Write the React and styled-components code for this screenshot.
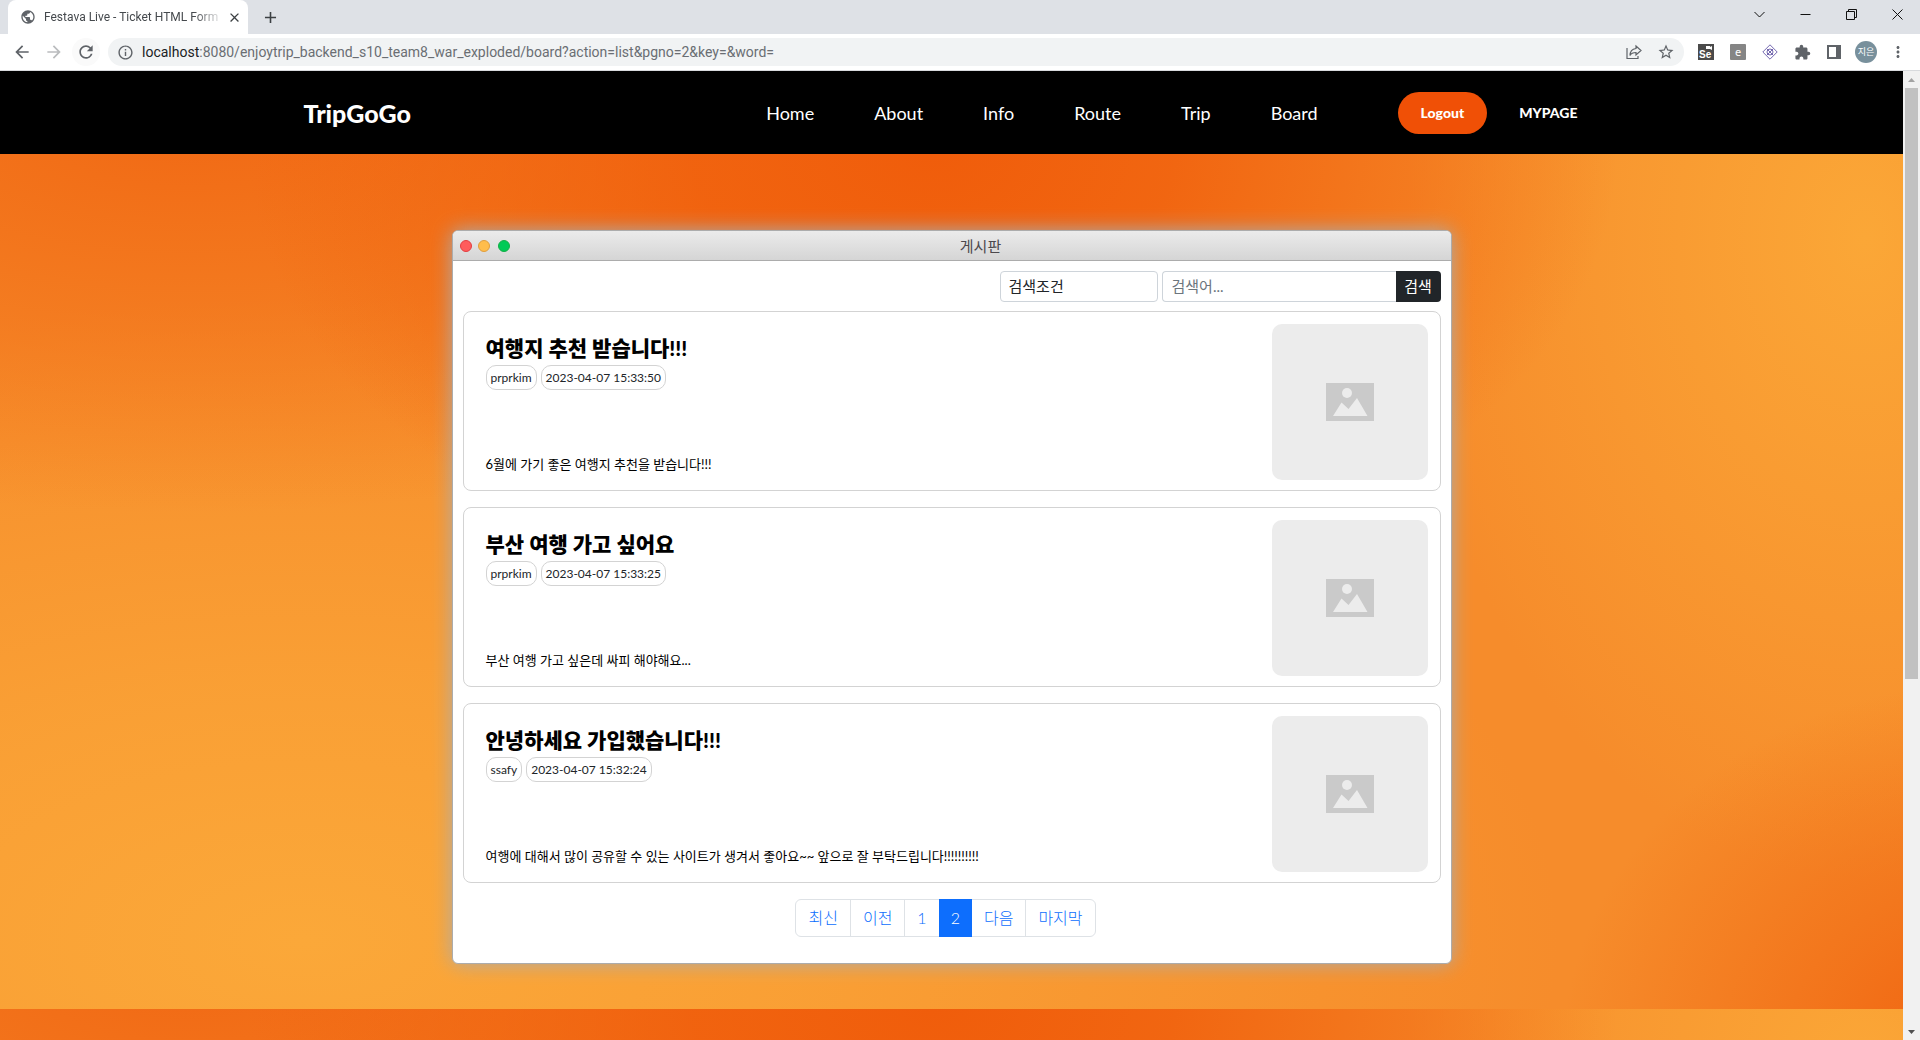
import React from "react";
import styled, { createGlobalStyle } from "styled-components";
import {
  MdArrowBack, MdArrowForward, MdRefresh, MdInfoOutline,
  MdStarBorder, MdExtension, MdMoreVert, MdPublic, MdClose, MdAdd,
} from "react-icons/md";

const GlobalStyle = createGlobalStyle`
  *, *::before, *::after { box-sizing: border-box; }
  body { margin: 0; font-family: Lato, "Noto Sans CJK KR", sans-serif; color: #212529; }
  h1, h2, p, ul { margin: 0; padding: 0; }
  ul { list-style: none; }
  a { color: inherit; text-decoration: none; }
  button { border: 0; padding: 0; background: none; font: inherit; color: inherit; cursor: pointer; }
  svg { display: block; flex: none; }
`;

const Browser = styled.div`
  display: flex;
  flex-direction: column;
  height: 100vh;
  overflow: hidden;
`;

const TabStrip = styled.header`
  display: flex;
  flex: none;
  height: 34px;
  padding-left: 8px;
  background: #dee1e6;
`;

const Tab = styled.div`
  display: flex;
  align-items: center;
  width: 240px;
  padding: 0 8px 0 12px;
  gap: 8px;
  border-radius: 8px 8px 0 0;
  background: #fff;
  color: #5f6368;
`;

const TabTitle = styled.span`
  flex: 1;
  white-space: nowrap;
  font: 12px/16px Roboto, sans-serif;
  color: #45494d;
  mask-image: linear-gradient(90deg, #000 86%, #0003);
`;

const IconButton = styled.button`
  display: grid;
  place-items: center;
  width: ${(p) => p.$w || 32}px;
  height: ${(p) => p.$h || 32}px;
  flex: none;
  margin: ${(p) => (p.$round ? "0 2px" : "0")};
  border-radius: ${(p) => (p.$round ? "50%" : "0")};
  background: ${(p) => (p.$round ? "#fafafa" : "none")};
  color: ${(p) => p.$color || "#5f6368"};
`;

const WindowButtons = styled.div`
  display: flex;
  margin-left: auto;
`;

const Toolbar = styled.div`
  display: flex;
  align-items: center;
  flex: none;
  height: 37px;
  padding: 0 6px;
  border-bottom: 1px solid #d8dadd;
  background: #fff;
`;

const AddressBar = styled.form`
  display: flex;
  flex: 1;
  align-items: center;
  height: 28px;
  margin: 0 6px;
  padding: 0 4px 0 9px;
  gap: 8px;
  border-radius: 14px;
  background: #f1f3f4;
  color: #5f6368;
`;

const Url = styled.div`
  flex: 1;
  font: 14px/20px Roboto, sans-serif;
  color: #6a6e73;
  b { font-weight: 400; color: #202124; }
`;

const Avatar = styled.span`
  display: grid;
  place-items: center;
  width: 22px;
  height: 22px;
  border-radius: 50%;
  background: #78909c;
  color: #fff;
  font: 9px/12px "Noto Sans CJK KR", sans-serif;
`;

const Viewport = styled.div`
  display: flex;
  flex: 1;
  min-height: 0;
`;

const Page = styled.div`
  display: flex;
  flex-direction: column;
  flex: 1;
  min-width: 0;
  overflow: hidden;
`;

const ScrollTrack = styled.div`
  display: flex;
  flex-direction: column;
  align-items: center;
  width: 17px;
  padding: 0 2px;
  background: #f1f1f1;
`;

const ScrollThumb = styled.div`
  flex: 0 0 61%;
  width: 13px;
  background: #c1c1c1;
`;

const Spacer = styled.div`
  flex: 1;
`;

const Nav = styled.nav`
  flex: none;
  background: #000;
  color: #fff;
`;

const NavInner = styled.div`
  display: flex;
  align-items: center;
  max-width: 1296px;
  height: 83px;
  margin: 0 auto;
`;

const Brand = styled.a`
  margin-right: auto;
  font-size: 25px;
  line-height: 36px;
  font-weight: 900;
`;

const NavLinks = styled.ul`
  display: flex;
  gap: 60px;
  margin-right: 80px;
  font-size: 18px;
  line-height: 24px;
`;

const LogoutButton = styled.button`
  padding: 9px 23px;
  border-radius: 21px;
  background: #f05006;
  font-size: 14px;
  line-height: 24px;
  font-weight: 900;
`;

const MyPage = styled.a`
  margin: 0 22px 0 32px;
  font-size: 14px;
  line-height: 24px;
  font-weight: 900;
`;

const Backdrop = styled.div`
  flex: ${(p) => (p.$rest ? "1 0 0" : "none")};
  padding: ${(p) => (p.$rest ? "0" : "76px 24px 45px")};
  background:
    radial-gradient(ellipse 36% 52% at 49% 0, #f05d0b 0%, #f05d0bd0 35%, #f05d0b00 100%),
    radial-gradient(ellipse 50% 46% at 10% -4%, #f0610fd0 0%, #f0610f00 100%),
    radial-gradient(ellipse 22% 44% at 104% 106%, #f0620f 0%, #f0620f90 40%, #f0620f00 100%),
    radial-gradient(ellipse 24% 75% at 98% 10%, #fba737 0%, #fba73700 100%),
    radial-gradient(ellipse 66% 75% at 16% 92%, #fba839 0%, #fba839b0 40%, #fba83900 100%),
    #f68c2b;
  background-size: 100% 855px;
`;

const Board = styled.main`
  max-width: 1000px;
  margin: 0 auto;
  border: 1px solid #acacac;
  border-radius: 6px;
  overflow: hidden;
  background: #fff;
  box-shadow: 0 0 20px #acacac;
`;

const TitleBar = styled.div`
  display: flex;
  align-items: center;
  height: 30px;
  padding: 0 7px;
  border-bottom: 1px solid #acacac;
  background: linear-gradient(#ebebeb, #d5d5d5);
`;

const Light = styled.span`
  width: 12px;
  height: 12px;
  margin-right: ${(p) => p.$gap}px;
  border: 1px solid ${(p) => p.$edge};
  border-radius: 50%;
  background: ${(p) => p.$fill};
`;

const BoardTitle = styled.h1`
  flex: 1;
  text-align: center;
  font-size: 15px;
  line-height: 20px;
  font-weight: 400;
  color: #4d494d;
`;

const BoardBody = styled.div`
  padding: 10px 10px 26px;
`;

const SearchForm = styled.form`
  display: flex;
  justify-content: flex-end;
  margin-bottom: 9px;
  font-size: 15px;
  line-height: 20px;
`;

const SearchSelect = styled.select`
  appearance: none;
  width: 158px;
  height: 31px;
  margin-right: 4px;
  padding: 0 8px 2px;
  border: 1px solid #ced4da;
  border-radius: 4px;
  background: #fff;
  font: inherit;
  color: #212529;
`;

const SearchInput = styled.input`
  width: 234px;
  height: 31px;
  padding: 0 9px 2px;
  border: 1px solid #ced4da;
  border-right: 0;
  border-radius: 4px 0 0 4px;
  font: inherit;
  &::placeholder { color: #6c757d; opacity: 1; }
`;

const SearchButton = styled.button`
  width: 45px;
  height: 31px;
  padding-bottom: 2px;
  border-radius: 0 4px 4px 0;
  background: #212529;
  color: #fff;
`;

const PostList = styled.ul`
  display: grid;
  gap: 16px;
`;

const PostCard = styled.li`
  display: flex;
  justify-content: space-between;
  padding: 12px 12px 10px 22px;
  border: 1px solid #d3d3d3;
  border-radius: 8px;
  background: #fff;
  color: #000;
`;

const PostText = styled.div`
  display: flex;
  flex-direction: column;
  padding: 10px 0 4px;
`;

const PostTitle = styled.h2`
  margin-bottom: 3px;
  font-size: 21px;
  line-height: 28px;
  font-weight: 900;
`;

const Badges = styled.div`
  display: flex;
  gap: 4px;
`;

const Badge = styled.span`
  padding: 3px 4px;
  border: 1px solid #d3d3d3;
  border-radius: 10px;
  font-size: 12px;
  line-height: 17px;
  color: #212529;
`;

const Excerpt = styled.p`
  margin-top: auto;
  font-size: 13px;
  line-height: 24px;
`;

const Thumb = styled.div`
  display: grid;
  place-items: center;
  width: 156px;
  height: 156px;
  border-radius: 10px;
  background: #ececec;
`;

const PagerRow = styled.nav`
  padding-right: 12px;
`;

const Pagination = styled.ul`
  display: flex;
  width: fit-content;
  margin: 16px auto 0;
  border: 1px solid #dee2e6;
  border-radius: 6px;
`;

const PageItem = styled.li`
  margin: ${(p) => (p.$active ? "-1px 0" : "0")};
  padding: ${(p) => (p.$active ? "1px 0" : "0")};
  border-left: ${(p) => (p.$divider ? "1px solid #dee2e6" : "0")};
  background: ${(p) => (p.$active ? "#0d6efd" : "none")};
  color: ${(p) => (p.$active ? "#fff" : "#0d6efd")};
  a {
    display: block;
    padding: 6px 12px;
    font-size: 16px;
    line-height: 24px;
    font-weight: 300;
  }
`;

const posts = [
  { title: "여행지 추천 받습니다!!!", author: "prprkim", date: "2023-04-07 15:33:50", text: "6월에 가기 좋은 여행지 추천을 받습니다!!!" },
  { title: "부산 여행 가고 싶어요", author: "prprkim", date: "2023-04-07 15:33:25", text: "부산 여행 가고 싶은데 싸피 해야해요..." },
  { title: "안녕하세요 가입했습니다!!!", author: "ssafy", date: "2023-04-07 15:32:24", text: "여행에 대해서 많이 공유할 수 있는 사이트가 생겨서 좋아요~~ 앞으로 잘 부탁드립니다!!!!!!!!!!" },
];

const pages = ["최신", "이전", "1", "2", "다음", "마지막"];
const links = ["Home", "About", "Info", "Route", "Trip", "Board"];

const Placeholder = () => (
  <svg width="48" height="38" viewBox="0 0 48 38" aria-hidden="true">
    <path fill="#cacaca" d="M0 0h48v38H0z" />
    <circle cx="21" cy="10" r="5" fill="#ececec" />
    <path fill="#ececec" d="M7 33l8.500-13.500 7 6.500L31 15l10.500 18z" />
  </svg>
);

const Arrow = ({ down }) => (
  <svg width="17" height="17" viewBox="0 0 17 17" aria-hidden="true">
    <path d={down ? "M5 7h7l-3.500 4z" : "M5 11h7L8.500 7z"} fill={down ? "#505050" : "#a3a3a3"} />
  </svg>
);

const Line = ({ d, size = 11 }) => (
  <svg width={size} height={size} viewBox="0 0 11 11" fill="none" stroke="#111" aria-hidden="true">
    <path d={d} />
  </svg>
);

function BrowserChrome() {
  return (
    <>
      <TabStrip>
        <Tab>
          <MdPublic size={16} />
          <TabTitle>Festava Live - Ticket HTML Form</TabTitle>
          <IconButton $w={16} $h={16} $color="#3c4043" aria-label="Close tab"><MdClose size={15} /></IconButton>
        </Tab>
        <IconButton $w={44} $h={34} $color="#3c4043" aria-label="New tab"><MdAdd size={19} /></IconButton>
        <WindowButtons>
          <IconButton $w={46} $h={28} aria-label="Search tabs"><Line d="M.5 3l5 5 5-5" /></IconButton>
          <IconButton $w={46} $h={28} aria-label="Minimize"><Line d="M.5 5.500h10" /></IconButton>
          <IconButton $w={46} $h={28} aria-label="Restore"><Line d="M.5 2.500h8v8h-8zM2.500 2.500v-2h8v8h-2" /></IconButton>
          <IconButton $w={46} $h={28} aria-label="Close"><Line d="M.5.5l10 10M10.500.5l-10 10" /></IconButton>
        </WindowButtons>
      </TabStrip>
      <Toolbar>
        <IconButton aria-label="Back"><MdArrowBack size={20} /></IconButton>
        <IconButton $color="#babcbe" aria-label="Forward"><MdArrowForward size={20} /></IconButton>
        <IconButton $w={28} $h={28} $round aria-label="Reload"><MdRefresh size={20} /></IconButton>
        <AddressBar onSubmit={(e) => e.preventDefault()}>
          <MdInfoOutline size={17} />
          <Url><b>localhost</b>:8080/enjoytrip_backend_s10_team8_war_exploded/board?action=list&amp;pgno=2&amp;key=&amp;word=</Url>
          <IconButton type="button" $w={20} $h={28} aria-label="Share">
            <svg width="16" height="16" viewBox="0 0 16 16" fill="none" stroke="#5f6368" strokeWidth="1.200">
              <path d="M1 4v10.500h11V12M10 2l5 4.500-5 4.500V8.500C7 8.500 5 9.500 4 11.500 4 7.500 6.500 5 10 4.500z" />
            </svg>
          </IconButton>
          <IconButton type="button" $w={28} $h={28} aria-label="Bookmark"><MdStarBorder size={18} /></IconButton>
        </AddressBar>
        <IconButton aria-label="Selenium extension">
          <svg width="16" height="16" viewBox="0 0 16 16">
            <path fill="#4a4a4a" d="M0 0h16v16H0z" />
            <path fill="#fff" d="M8 2h4v1l2-1v4l-2-1H8z" />
            <text x="1" y="14" fontSize="10" fontWeight="700" fill="#fff" fontFamily="Liberation Sans, sans-serif">Se</text>
          </svg>
        </IconButton>
        <IconButton aria-label="E extension">
          <svg width="16" height="16" viewBox="0 0 16 16">
            <rect width="16" height="16" rx="1" fill="#858585" />
            <text x="5" y="12" fontSize="11" fill="#fff" fontFamily="Noto Sans, sans-serif">e</text>
          </svg>
        </IconButton>
        <IconButton aria-label="Diamond extension">
          <svg width="16" height="16" viewBox="0 0 16 16" fill="none" stroke="#7468b0">
            <path d="M8 .8L15.200 8 8 15.200.8 8z" />
            <circle cx="8" cy="8" r="3" />
            <path d="M5 5l6 6M11 5l-6 6M7 8h2" />
          </svg>
        </IconButton>
        <IconButton aria-label="Extensions"><MdExtension size={17} /></IconButton>
        <IconButton aria-label="Side panel">
          <svg width="14" height="14" viewBox="0 0 14 14"><path fill="#5f6368" fillRule="evenodd" d="M0 0h14v14H0zM2 2v10h7V2z" /></svg>
        </IconButton>
        <IconButton aria-label="Profile"><Avatar>지은</Avatar></IconButton>
        <IconButton aria-label="Menu"><MdMoreVert size={18} /></IconButton>
      </Toolbar>
    </>
  );
}

function SiteNav() {
  return (
    <Nav>
      <NavInner>
        <Brand href="#home">TripGoGo</Brand>
        <NavLinks>
          {links.map((name) => <li key={name}><a href={`#${name}`}>{name}</a></li>)}
        </NavLinks>
        <LogoutButton>Logout</LogoutButton>
        <MyPage href="#mypage">MYPAGE</MyPage>
      </NavInner>
    </Nav>
  );
}

function Post({ post }) {
  return (
    <PostCard>
      <PostText>
        <PostTitle>{post.title}</PostTitle>
        <Badges>
          <Badge>{post.author}</Badge>
          <Badge>{post.date}</Badge>
        </Badges>
        <Excerpt>{post.text}</Excerpt>
      </PostText>
      <Thumb><Placeholder /></Thumb>
    </PostCard>
  );
}

export default function App() {
  return (
    <Browser>
      <GlobalStyle />
      <BrowserChrome />
      <Viewport>
        <Page>
          <SiteNav />
          <Backdrop>
            <Board>
              <TitleBar>
                <Light $fill="#ff5c5c" $edge="#e33e41" $gap={6} />
                <Light $fill="#ffbd4c" $edge="#e09e3e" $gap={8} />
                <Light $fill="#00ca56" $edge="#14ae46" $gap={8} />
                <BoardTitle>게시판</BoardTitle>
              </TitleBar>
              <BoardBody>
                <SearchForm onSubmit={(e) => e.preventDefault()}>
                  <SearchSelect aria-label="검색조건" defaultValue="">
                    <option value="">검색조건</option>
                  </SearchSelect>
                  <SearchInput aria-label="검색어" placeholder="검색어..." />
                  <SearchButton>검색</SearchButton>
                </SearchForm>
                <PostList>
                  {posts.map((post) => <Post key={post.date} post={post} />)}
                </PostList>
                <PagerRow>
                  <Pagination>
                    {pages.map((name, i) => (
                      <PageItem key={name} $active={name === "2"} $divider={i > 0 && i !== 3 && i !== 4}>
                        <a href={`#page-${name}`}>{name}</a>
                      </PageItem>
                    ))}
                  </Pagination>
                </PagerRow>
              </BoardBody>
            </Board>
          </Backdrop>
          <Backdrop $rest />
        </Page>
        <ScrollTrack>
          <Arrow />
          <ScrollThumb />
          <Spacer />
          <Arrow down />
        </ScrollTrack>
      </Viewport>
    </Browser>
  );
}
